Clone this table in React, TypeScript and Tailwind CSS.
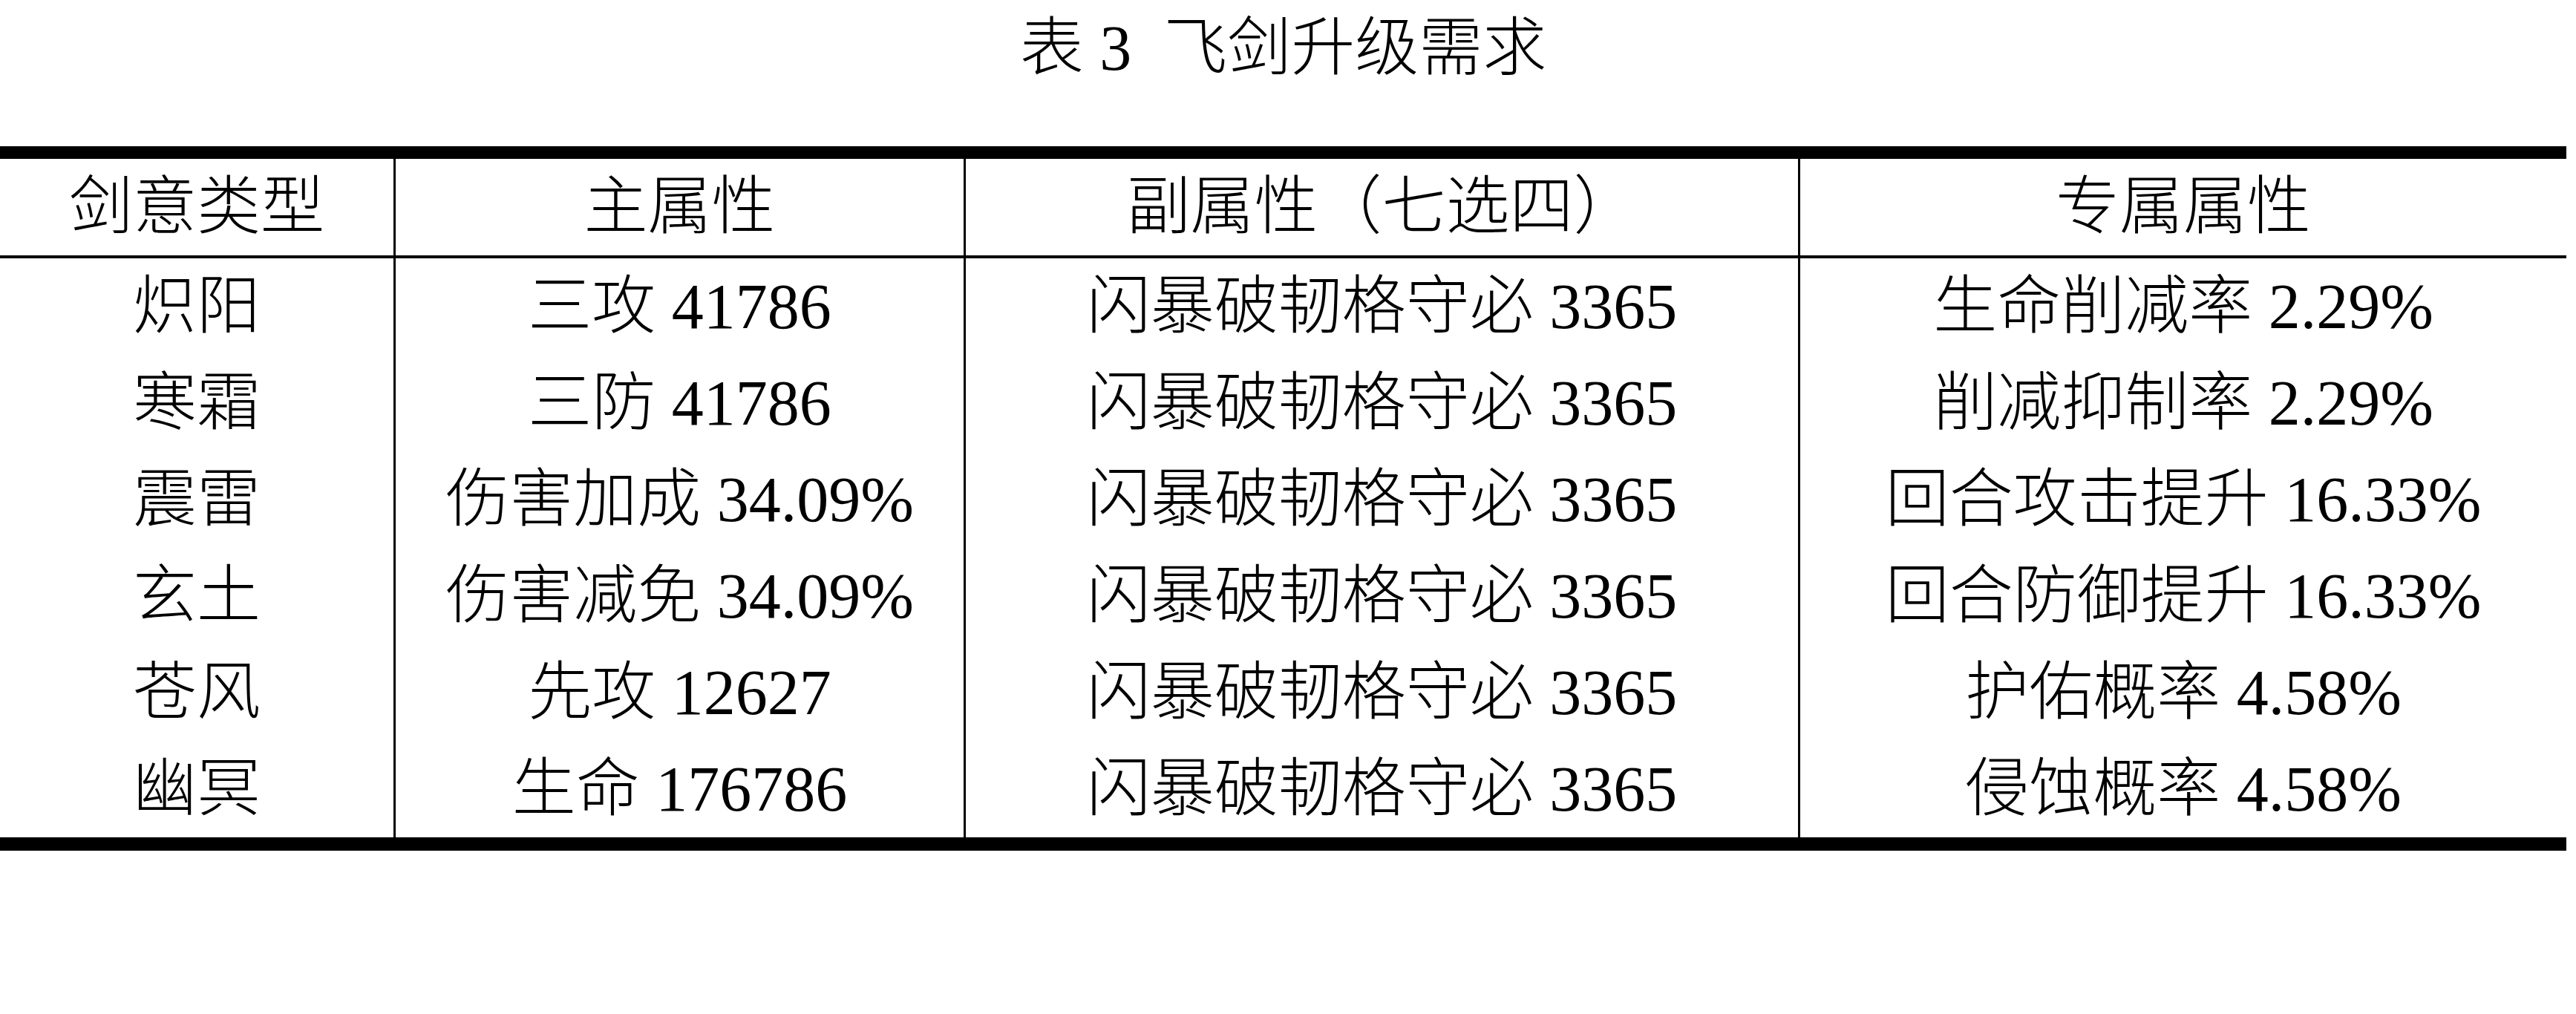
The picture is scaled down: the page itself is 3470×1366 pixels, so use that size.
const rows = [
  ["炽阳", "三攻 41786", "闪暴破韧格守必 3365", "生命削减率 2.29%"],
  ["寒霜", "三防 41786", "闪暴破韧格守必 3365", "削减抑制率 2.29%"],
  ["震雷", "伤害加成 34.09%", "闪暴破韧格守必 3365", "回合攻击提升 16.33%"],
  ["玄土", "伤害减免 34.09%", "闪暴破韧格守必 3365", "回合防御提升 16.33%"],
  ["苍风", "先攻 12627", "闪暴破韧格守必 3365", "护佑概率 4.58%"],
  ["幽冥", "生命 176786", "闪暴破韧格守必 3365", "侵蚀概率 4.58%"],
];

const head = ["剑意类型", "主属性", "副属性（七选四）", "专属属性"];

function Row({ cells, header }: { cells: string[]; header?: boolean }) {
  return (
    <div
      className={`grid grid-cols-[530px_768px_1124px_1fr] ${
        header ? "h-[134px] border-b-4 border-black" : "h-[130px]"
      }`}
    >
      {cells.map((c, i) => (
        <div
          key={i}
          className={`flex items-center justify-center whitespace-pre ${
            i > 0 ? "border-l-[3px] border-black" : ""
          }`}
        >
          {c}
        </div>
      ))}
    </div>
  );
}

export default function App() {
  return (
    <div className="min-h-screen w-[3470px] bg-white text-black">
      <div className="w-[3457px] font-['Liberation_Serif','Noto_Sans_CJK_SC',serif] text-[86px] font-light leading-none">
        <div className="flex h-[130px] items-center justify-center whitespace-pre">
          表 3  飞剑升级需求
        </div>
        <div className="mt-[67px] border-t-[17px] border-b-[18px] border-black">
          <Row cells={head} header />
          {rows.map((r, i) => (
            <Row key={i} cells={r} />
          ))}
        </div>
      </div>
    </div>
  );
}
